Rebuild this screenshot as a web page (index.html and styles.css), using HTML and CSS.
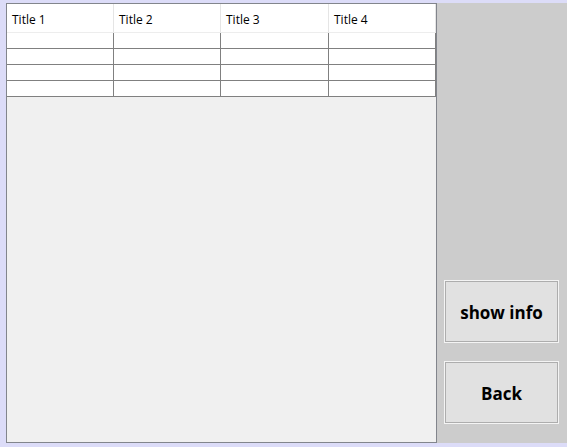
FILE: index.html
```html
<!DOCTYPE html>
<html>
<head>
<meta charset="utf-8">
<link rel="stylesheet" href="styles.css">
</head>
<body>
<div class="window">
  <div class="left-panel">
    <div class="grid">
      <div class="hcell">Title 1</div>
      <div class="hcell">Title 2</div>
      <div class="hcell">Title 3</div>
      <div class="hcell">Title 4</div>
      <div class="cell"></div><div class="cell"></div><div class="cell"></div><div class="cell"></div>
      <div class="cell"></div><div class="cell"></div><div class="cell"></div><div class="cell"></div>
      <div class="cell"></div><div class="cell"></div><div class="cell"></div><div class="cell"></div>
      <div class="cell"></div><div class="cell"></div><div class="cell"></div><div class="cell"></div>
    </div>
  </div>
  <div class="right-panel">
    <button class="btn">show info</button>
    <button class="btn">Back</button>
  </div>
</div>
</body>
</html>
```
FILE: styles.css
```css
html, body {
  margin: 0;
  padding: 0;
  width: 567px;
  height: 447px;
  overflow: hidden;
}
body {
  background: #dcdcf8;
  padding: 3px 0 4px 6px;
  box-sizing: border-box;
  font-family: "Open Sans", "DejaVu Sans", sans-serif;
}
.window {
  display: flex;
  height: 440px;
}
.left-panel {
  width: 431px;
  box-sizing: border-box;
  border: 1px solid #82858c;
  background: #f0f0f0;
}
.grid {
  display: grid;
  grid-template-columns: 107px 107px 108px 107px;
}
.hcell {
  height: 29px;
  box-sizing: border-box;
  background: #ffffff;
  border-right: 1px solid #e5e5e5;
  border-bottom: 1px solid #ededed;
  padding: 3px 0 0 5px;
  font-size: 12px;
  line-height: 26px;
  color: #000;
}
.cell {
  height: 16px;
  box-sizing: border-box;
  background: #ffffff;
  border-right: 1px solid #808080;
  border-bottom: 1px solid #808080;
}
.right-panel {
  flex: 1;
  background: #cccccc;
  display: flex;
  flex-direction: column;
  justify-content: flex-end;
  gap: 20px;
  padding: 0 9px 20px 8px;
}
.btn {
  width: 113px;
  height: 61px;
  box-sizing: border-box;
  background: #e1e1e1;
  border: 1px solid #adadad;
  box-shadow: 0 0 0 1px #f4f4f4;
  font-family: "Open Sans", "DejaVu Sans", sans-serif;
  font-weight: 700;
  font-size: 17px;
  color: #000;
  padding: 2px 0 0 0;
  margin: 0;
}
```
